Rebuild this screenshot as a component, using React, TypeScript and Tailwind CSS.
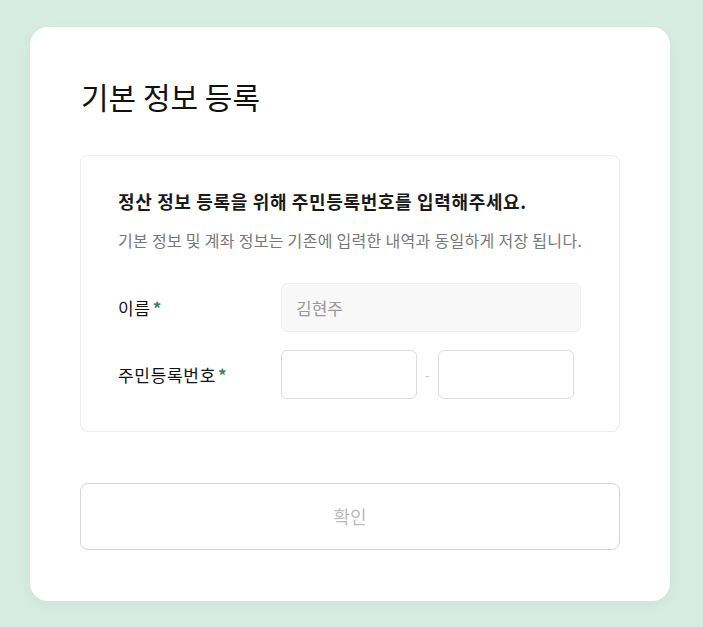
export default function App() {
  const font = { fontFamily: '"Noto Sans CJK KR", "Noto Sans", sans-serif' }
  return (
    <div className="h-[627px] w-full bg-[#d6ebe1] pt-[27px] pl-[30px]" style={font}>
      <div className="h-[574px] w-[640px] rounded-[18px] bg-white px-[50px] pt-[49px] shadow-[0_4px_14px_rgba(0,0,0,0.04)]">
        <h1 className="text-[30px] leading-[40px] font-normal text-[#111] pl-px tracking-[0px]">기본 정보 등록</h1>

        <div className="mt-[39px] rounded-[8px] border border-[#ececec] pl-[37px] pr-[30px] pt-[33px] pb-[32px]">
          <p className="text-[18px] leading-[24px] font-bold text-[#1a1a1a] tracking-[0.65px] whitespace-nowrap">
            정산 정보 등록을 위해 주민등록번호를 입력해주세요.
          </p>
          <p className="mt-[16px] text-[16px] leading-[22px] text-[#777] tracking-[0.3px] whitespace-nowrap">
            기본 정보 및 계좌 정보는 기존에 입력한 내역과 동일하게 저장 됩니다.
          </p>

          <div className="mt-[32px] flex items-center">
            <div className="w-[163px] text-[17px] text-[#111] tracking-[0.7px]">
              이름<span className="ml-[2px] font-bold text-[#3f7f6a]">*</span>
            </div>
            <div className="flex h-[49px] w-[300px] items-center rounded-[6px] border border-[#f0f0f0] bg-[#f8f8f8] px-[14px] text-[17px] text-[#999]">
              김현주
            </div>
          </div>

          <div className="mt-[18px] flex items-center">
            <div className="w-[163px] text-[17px] text-[#111] tracking-[0.7px]">
              주민등록번호<span className="ml-[2px] font-bold text-[#3f7f6a]">*</span>
            </div>
            <div className="h-[49px] w-[136px] rounded-[6px] border border-[#dcdcdc] bg-white" />
            <div className="flex w-[21px] justify-center text-[14px] text-[#ccc]">-</div>
            <div className="h-[49px] w-[136px] rounded-[6px] border border-[#dcdcdc] bg-white" />
          </div>
        </div>

        <button className="mt-[51px] flex h-[67px] w-full items-center justify-center rounded-[8px] border border-[#d6d6d6] bg-white text-[18px] text-[#bbb]">
          확인
        </button>
      </div>
    </div>
  )
}
